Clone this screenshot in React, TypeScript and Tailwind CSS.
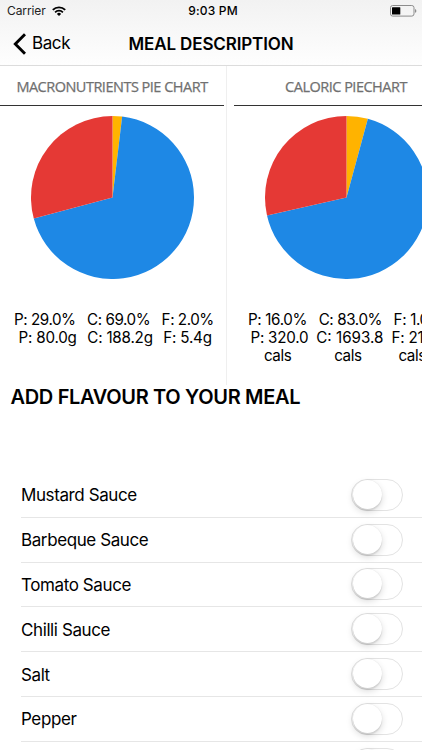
type Line = { text: string; offset: string }[];

type Chart = {
  title: string;
  fatEnd: number;
  carbEnd: number;
  lines: Line[];
};

const CHARTS: Chart[] = [
  {
    title: "MACRONUTRIENTS PIE CHART",
    fatEnd: 6.8,
    carbEnd: 255,
    lines: [
      [
        { text: "P: 29.0%", offset: "ml-[14px] tracking-[-0.45px]" },
        { text: "C: 69.0%", offset: "ml-[11.5px] tracking-[-0.45px]" },
        { text: "F: 2.0%", offset: "ml-[11.5px] tracking-[-0.45px]" },
      ],
      [
        { text: "P: 80.0g", offset: "ml-[18.5px] tracking-[-0.2px]" },
        { text: "C: 188.2g", offset: "ml-[10.5px] tracking-[-0.2px]" },
        { text: "F: 5.4g", offset: "ml-[10.5px] tracking-[-0.2px]" },
      ],
    ],
  },
  {
    title: "CALORIC PIECHART",
    fatEnd: 15.2,
    carbEnd: 257.3,
    lines: [
      [
        { text: "P: 16.0%", offset: "ml-[14px] tracking-[-0.35px]" },
        { text: "C: 83.0%", offset: "ml-[11.5px] tracking-[-0.4px]" },
        { text: "F: 1.0%", offset: "ml-[11.5px] tracking-[-0.35px]" },
      ],
      [
        { text: "P: 320.0", offset: "ml-[16.5px] tracking-[-0.25px]" },
        { text: "C: 1693.8", offset: "ml-[8px] tracking-[0px]" },
        { text: "F: 21.6", offset: "ml-[8px] tracking-[-0.2px]" },
      ],
      [
        { text: "cals", offset: "ml-[30px] tracking-[-0.45px]" },
        { text: "cals", offset: "ml-[43px] tracking-[-0.45px]" },
        { text: "cals", offset: "ml-[37px] tracking-[-0.45px]" },
      ],
    ],
  },
];

const FLAVOURS = [
  "Mustard Sauce",
  "Barbeque Sauce",
  "Tomato Sauce",
  "Chilli Sauce",
  "Salt",
  "Pepper",
  "Oregano",
];

const R = 81.5;

function slicePath(from: number, to: number) {
  const point = (deg: number) => {
    const a = (deg * Math.PI) / 180;
    return `${R + R * Math.sin(a)} ${R - R * Math.cos(a)}`;
  };
  const large = to - from > 180 ? 1 : 0;
  return `M${R} ${R}L${point(from)}A${R} ${R} 0 ${large} 1 ${point(to)}Z`;
}

function Pie({ fatEnd, carbEnd }: { fatEnd: number; carbEnd: number }) {
  return (
    <svg viewBox="0 0 163 163" className="h-[163px] w-[163px]">
      <path d={slicePath(0, fatEnd)} fill="#ffb300" />
      <path d={slicePath(fatEnd, carbEnd)} fill="#1e88e5" />
      <path d={slicePath(carbEnd, 360)} fill="#e53935" />
    </svg>
  );
}

function StatusBar() {
  return (
    <div className="grid h-[22px] grid-cols-3 items-center pl-[7px] pr-[5px] text-[12px] leading-none">
      <div className="flex items-center gap-[6px] text-[#222]">
        <span className="tracking-[-0.1px]">Carrier</span>
        <svg viewBox="0 0 14 10" className="h-[10px] w-[14px]" fill="none" stroke="#000">
          <path d="M0.8 3.9a8.8 8.8 0 0 1 12.4 0" strokeWidth="1.9" />
          <path d="M3.1 6.3a5.5 5.5 0 0 1 7.8 0" strokeWidth="1.8" />
          <path d="M7 10 4.9 7.9a3 3 0 0 1 4.2 0Z" fill="#000" stroke="none" />
        </svg>
      </div>
      <span className="pl-[2px] text-center font-medium tracking-[0.2px]">9:03 PM</span>
      <svg viewBox="0 0 27 12" className="h-[12px] w-[27px] justify-self-end">
        <rect x="0.5" y="0.5" width="23.5" height="10.6" rx="2.2" fill="none" stroke="#8c8c8c" />
        <rect x="2" y="2.2" width="8.3" height="7.2" rx="0.5" fill="#000" />
        <path d="M25 4v3.8q1.4-.5 1.4-1.9T25 4Z" fill="#8c8c8c" />
      </svg>
    </div>
  );
}

function NavBar() {
  return (
    <div className="grid h-[43px] grid-cols-[128.5px_1fr_129px] items-center">
      <button className="flex items-center gap-[6px] pl-[13px] text-[17px] leading-none tracking-[-0.4px]">
        <svg viewBox="0 0 13 22" className="h-[22px] w-[13px]" fill="none" stroke="#000" strokeWidth="2.9">
          <path d="M12 1.2 2.3 11l9.7 9.8" />
        </svg>
        Back
      </button>
      <h1 className="whitespace-nowrap pt-px text-[17px] font-semibold leading-none tracking-[-0.13px]">
        MEAL DESCRIPTION
      </h1>
    </div>
  );
}

function ChartCard({ chart }: { chart: Chart }) {
  return (
    <section className="flex h-[319px] w-[234px] shrink-0 flex-col">
      <div className="mr-[10px] flex h-[40px] items-center justify-center border-b border-[#333] pt-[3px]">
        <h2 className="whitespace-nowrap font-['Open_Sans','Liberation_Sans',sans-serif] text-[14.5px] leading-none tracking-[-0.5px] text-[#707070] [-webkit-text-stroke:0.25px_#707070]">
          {chart.title}
        </h2>
      </div>
      <div className="mr-[9px] mt-[10px] flex justify-center">
        <Pie fatEnd={chart.fatEnd} carbEnd={chart.carbEnd} />
      </div>
      <div className="mt-[31.5px] text-[15.2px] leading-[18.2px]">
        {chart.lines.map((line, i) => (
          <p key={i} className="flex whitespace-nowrap">
            {line.map((cell, j) => (
              <span key={j} className={cell.offset}>
                {cell.text}
              </span>
            ))}
          </p>
        ))}
      </div>
    </section>
  );
}

function Toggle() {
  return (
    <button
      role="switch"
      aria-checked="false"
      className="flex h-[32px] w-[52px] rounded-full border-[1.5px] border-[#e3e3e3] bg-white pl-px"
    >
      <span className="h-[29px] w-[29px] rounded-full bg-white shadow-[0_3px_7px_rgba(0,0,0,0.15),0_2px_1px_rgba(0,0,0,0.08),0_0_1px_rgba(0,0,0,0.12)]" />
    </button>
  );
}

export default function App() {
  return (
    <main className="h-[750px] w-[422px] overflow-hidden bg-white font-['Inter','Liberation_Sans',sans-serif] text-black">
      <header className="h-[66px] border-b border-[#dcdcdc] bg-gradient-to-b from-[#f2f2f2] to-[#fefefe]">
        <StatusBar />
        <NavBar />
      </header>

      <div className="relative flex h-[319px] overflow-hidden">
        <ChartCard chart={CHARTS[0]} />
        <ChartCard chart={CHARTS[1]} />
        <div className="absolute inset-y-0 left-[226px] w-px bg-[#efefef]" />
      </div>

      <h2 className="h-[88px] whitespace-nowrap pl-[10.5px] text-[20px] font-semibold leading-[24px] tracking-[-0.33px]">
        ADD FLAVOUR TO YOUR MEAL
      </h2>

      <ul>
        {FLAVOURS.map((name) => (
          <li
            key={name}
            className="ml-[21px] flex h-[44.8px] items-center justify-between border-b border-[#e6e6e6] pr-[19px]"
          >
            <span className="pt-[2px] text-[17px] leading-none tracking-[-0.4px]">{name}</span>
            <Toggle />
          </li>
        ))}
      </ul>
    </main>
  );
}
